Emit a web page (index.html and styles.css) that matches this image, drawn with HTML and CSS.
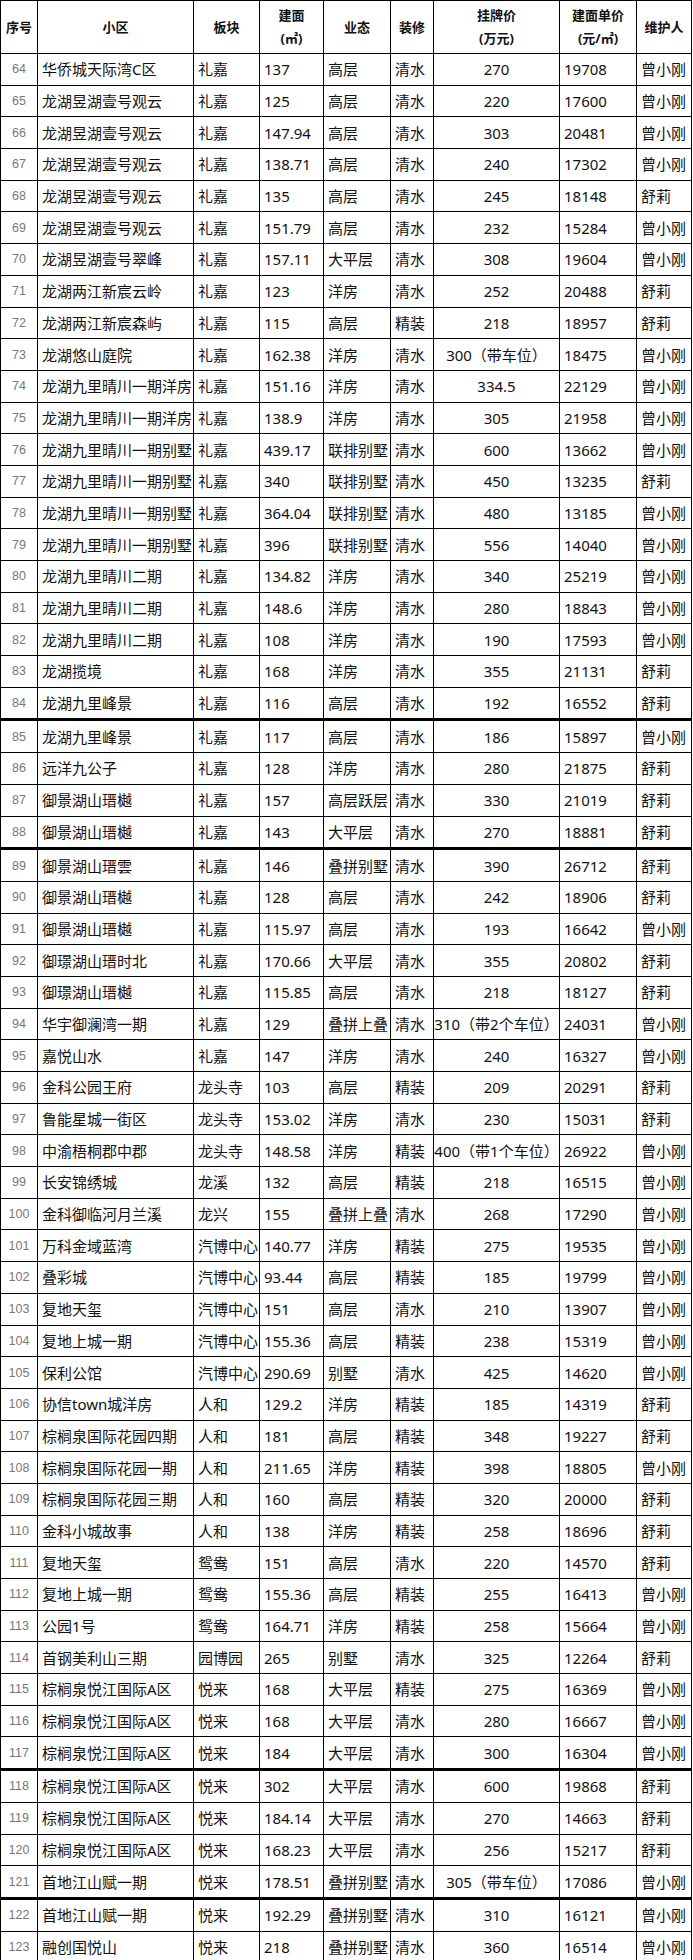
FILE: index.html
```html
<!DOCTYPE html>
<html lang="zh-CN">
<head>
<meta charset="utf-8">
<title>房源表</title>
<link rel="stylesheet" href="styles.css">
</head>
<body>
<table class="listing">
<colgroup>
<col class="c-seq"><col class="c-name"><col class="c-area"><col class="c-size"><col class="c-type"><col class="c-deco"><col class="c-price"><col class="c-unit"><col class="c-agent">
</colgroup>
<thead>
<tr><th>序号</th><th>小区</th><th>板块</th><th>建面<br>(㎡)</th><th>业态</th><th>装修</th><th>挂牌价<br>(万元)</th><th>建面单价<br>(元/㎡)</th><th>维护人</th></tr>
</thead>
<tbody>
<tr><td class="seq">64</td><td>华侨城天际湾C区</td><td>礼嘉</td><td>137</td><td>高层</td><td>清水</td><td class="price">270</td><td>19708</td><td>曾小刚</td></tr>
<tr><td class="seq">65</td><td>龙湖昱湖壹号观云</td><td>礼嘉</td><td>125</td><td>高层</td><td>清水</td><td class="price">220</td><td>17600</td><td>曾小刚</td></tr>
<tr><td class="seq">66</td><td>龙湖昱湖壹号观云</td><td>礼嘉</td><td>147.94</td><td>高层</td><td>清水</td><td class="price">303</td><td>20481</td><td>曾小刚</td></tr>
<tr><td class="seq">67</td><td>龙湖昱湖壹号观云</td><td>礼嘉</td><td>138.71</td><td>高层</td><td>清水</td><td class="price">240</td><td>17302</td><td>曾小刚</td></tr>
<tr><td class="seq">68</td><td>龙湖昱湖壹号观云</td><td>礼嘉</td><td>135</td><td>高层</td><td>清水</td><td class="price">245</td><td>18148</td><td>舒莉</td></tr>
<tr><td class="seq">69</td><td>龙湖昱湖壹号观云</td><td>礼嘉</td><td>151.79</td><td>高层</td><td>清水</td><td class="price">232</td><td>15284</td><td>曾小刚</td></tr>
<tr><td class="seq">70</td><td>龙湖昱湖壹号翠峰</td><td>礼嘉</td><td>157.11</td><td>大平层</td><td>清水</td><td class="price">308</td><td>19604</td><td>曾小刚</td></tr>
<tr><td class="seq">71</td><td>龙湖两江新宸云岭</td><td>礼嘉</td><td>123</td><td>洋房</td><td>清水</td><td class="price">252</td><td>20488</td><td>舒莉</td></tr>
<tr><td class="seq">72</td><td>龙湖两江新宸森屿</td><td>礼嘉</td><td>115</td><td>高层</td><td>精装</td><td class="price">218</td><td>18957</td><td>舒莉</td></tr>
<tr><td class="seq">73</td><td>龙湖悠山庭院</td><td>礼嘉</td><td>162.38</td><td>洋房</td><td>清水</td><td class="price">300（带车位）</td><td>18475</td><td>曾小刚</td></tr>
<tr><td class="seq">74</td><td>龙湖九里晴川一期洋房</td><td>礼嘉</td><td>151.16</td><td>洋房</td><td>清水</td><td class="price">334.5</td><td>22129</td><td>曾小刚</td></tr>
<tr><td class="seq">75</td><td>龙湖九里晴川一期洋房</td><td>礼嘉</td><td>138.9</td><td>洋房</td><td>清水</td><td class="price">305</td><td>21958</td><td>曾小刚</td></tr>
<tr><td class="seq">76</td><td>龙湖九里晴川一期别墅</td><td>礼嘉</td><td>439.17</td><td>联排别墅</td><td>清水</td><td class="price">600</td><td>13662</td><td>曾小刚</td></tr>
<tr><td class="seq">77</td><td>龙湖九里晴川一期别墅</td><td>礼嘉</td><td>340</td><td>联排别墅</td><td>清水</td><td class="price">450</td><td>13235</td><td>舒莉</td></tr>
<tr><td class="seq">78</td><td>龙湖九里晴川一期别墅</td><td>礼嘉</td><td>364.04</td><td>联排别墅</td><td>清水</td><td class="price">480</td><td>13185</td><td>曾小刚</td></tr>
<tr><td class="seq">79</td><td>龙湖九里晴川一期别墅</td><td>礼嘉</td><td>396</td><td>联排别墅</td><td>清水</td><td class="price">556</td><td>14040</td><td>曾小刚</td></tr>
<tr><td class="seq">80</td><td>龙湖九里晴川二期</td><td>礼嘉</td><td>134.82</td><td>洋房</td><td>清水</td><td class="price">340</td><td>25219</td><td>曾小刚</td></tr>
<tr><td class="seq">81</td><td>龙湖九里晴川二期</td><td>礼嘉</td><td>148.6</td><td>洋房</td><td>清水</td><td class="price">280</td><td>18843</td><td>曾小刚</td></tr>
<tr><td class="seq">82</td><td>龙湖九里晴川二期</td><td>礼嘉</td><td>108</td><td>洋房</td><td>清水</td><td class="price">190</td><td>17593</td><td>曾小刚</td></tr>
<tr><td class="seq">83</td><td>龙湖揽境</td><td>礼嘉</td><td>168</td><td>洋房</td><td>清水</td><td class="price">355</td><td>21131</td><td>舒莉</td></tr>
<tr><td class="seq">84</td><td>龙湖九里峰景</td><td>礼嘉</td><td>116</td><td>高层</td><td>清水</td><td class="price">192</td><td>16552</td><td>舒莉</td></tr>
<tr class="sep"><td class="seq">85</td><td>龙湖九里峰景</td><td>礼嘉</td><td>117</td><td>高层</td><td>清水</td><td class="price">186</td><td>15897</td><td>曾小刚</td></tr>
<tr><td class="seq">86</td><td>远洋九公子</td><td>礼嘉</td><td>128</td><td>洋房</td><td>清水</td><td class="price">280</td><td>21875</td><td>舒莉</td></tr>
<tr><td class="seq">87</td><td>御景湖山瑨樾</td><td>礼嘉</td><td>157</td><td>高层跃层</td><td>清水</td><td class="price">330</td><td>21019</td><td>舒莉</td></tr>
<tr><td class="seq">88</td><td>御景湖山瑨樾</td><td>礼嘉</td><td>143</td><td>大平层</td><td>清水</td><td class="price">270</td><td>18881</td><td>舒莉</td></tr>
<tr class="sep"><td class="seq">89</td><td>御景湖山瑨雲</td><td>礼嘉</td><td>146</td><td>叠拼别墅</td><td>清水</td><td class="price">390</td><td>26712</td><td>舒莉</td></tr>
<tr><td class="seq">90</td><td>御景湖山瑨樾</td><td>礼嘉</td><td>128</td><td>高层</td><td>清水</td><td class="price">242</td><td>18906</td><td>舒莉</td></tr>
<tr><td class="seq">91</td><td>御景湖山瑨樾</td><td>礼嘉</td><td>115.97</td><td>高层</td><td>清水</td><td class="price">193</td><td>16642</td><td>曾小刚</td></tr>
<tr><td class="seq">92</td><td>御璟湖山瑨时北</td><td>礼嘉</td><td>170.66</td><td>大平层</td><td>清水</td><td class="price">355</td><td>20802</td><td>舒莉</td></tr>
<tr><td class="seq">93</td><td>御璟湖山瑨樾</td><td>礼嘉</td><td>115.85</td><td>高层</td><td>清水</td><td class="price">218</td><td>18127</td><td>舒莉</td></tr>
<tr><td class="seq">94</td><td>华宇御澜湾一期</td><td>礼嘉</td><td>129</td><td>叠拼上叠</td><td>清水</td><td class="price">310（带2个车位）</td><td>24031</td><td>曾小刚</td></tr>
<tr><td class="seq">95</td><td>嘉悦山水</td><td>礼嘉</td><td>147</td><td>洋房</td><td>清水</td><td class="price">240</td><td>16327</td><td>曾小刚</td></tr>
<tr><td class="seq">96</td><td>金科公园王府</td><td>龙头寺</td><td>103</td><td>高层</td><td>精装</td><td class="price">209</td><td>20291</td><td>舒莉</td></tr>
<tr><td class="seq">97</td><td>鲁能星城一街区</td><td>龙头寺</td><td>153.02</td><td>洋房</td><td>清水</td><td class="price">230</td><td>15031</td><td>舒莉</td></tr>
<tr><td class="seq">98</td><td>中渝梧桐郡中郡</td><td>龙头寺</td><td>148.58</td><td>洋房</td><td>精装</td><td class="price">400（带1个车位）</td><td>26922</td><td>曾小刚</td></tr>
<tr><td class="seq">99</td><td>长安锦绣城</td><td>龙溪</td><td>132</td><td>高层</td><td>精装</td><td class="price">218</td><td>16515</td><td>曾小刚</td></tr>
<tr><td class="seq">100</td><td>金科御临河月兰溪</td><td>龙兴</td><td>155</td><td>叠拼上叠</td><td>清水</td><td class="price">268</td><td>17290</td><td>曾小刚</td></tr>
<tr><td class="seq">101</td><td>万科金域蓝湾</td><td>汽博中心</td><td>140.77</td><td>洋房</td><td>精装</td><td class="price">275</td><td>19535</td><td>曾小刚</td></tr>
<tr><td class="seq">102</td><td>叠彩城</td><td>汽博中心</td><td>93.44</td><td>高层</td><td>精装</td><td class="price">185</td><td>19799</td><td>曾小刚</td></tr>
<tr><td class="seq">103</td><td>复地天玺</td><td>汽博中心</td><td>151</td><td>高层</td><td>清水</td><td class="price">210</td><td>13907</td><td>曾小刚</td></tr>
<tr><td class="seq">104</td><td>复地上城一期</td><td>汽博中心</td><td>155.36</td><td>高层</td><td>精装</td><td class="price">238</td><td>15319</td><td>曾小刚</td></tr>
<tr><td class="seq">105</td><td>保利公馆</td><td>汽博中心</td><td>290.69</td><td>别墅</td><td>清水</td><td class="price">425</td><td>14620</td><td>曾小刚</td></tr>
<tr><td class="seq">106</td><td>协信town城洋房</td><td>人和</td><td>129.2</td><td>洋房</td><td>精装</td><td class="price">185</td><td>14319</td><td>舒莉</td></tr>
<tr><td class="seq">107</td><td>棕榈泉国际花园四期</td><td>人和</td><td>181</td><td>高层</td><td>精装</td><td class="price">348</td><td>19227</td><td>舒莉</td></tr>
<tr><td class="seq">108</td><td>棕榈泉国际花园一期</td><td>人和</td><td>211.65</td><td>洋房</td><td>精装</td><td class="price">398</td><td>18805</td><td>曾小刚</td></tr>
<tr><td class="seq">109</td><td>棕榈泉国际花园三期</td><td>人和</td><td>160</td><td>高层</td><td>精装</td><td class="price">320</td><td>20000</td><td>舒莉</td></tr>
<tr><td class="seq">110</td><td>金科小城故事</td><td>人和</td><td>138</td><td>洋房</td><td>精装</td><td class="price">258</td><td>18696</td><td>舒莉</td></tr>
<tr><td class="seq">111</td><td>复地天玺</td><td>鸳鸯</td><td>151</td><td>高层</td><td>清水</td><td class="price">220</td><td>14570</td><td>舒莉</td></tr>
<tr><td class="seq">112</td><td>复地上城一期</td><td>鸳鸯</td><td>155.36</td><td>高层</td><td>精装</td><td class="price">255</td><td>16413</td><td>曾小刚</td></tr>
<tr><td class="seq">113</td><td>公园1号</td><td>鸳鸯</td><td>164.71</td><td>洋房</td><td>精装</td><td class="price">258</td><td>15664</td><td>曾小刚</td></tr>
<tr><td class="seq">114</td><td>首钢美利山三期</td><td>园博园</td><td>265</td><td>别墅</td><td>清水</td><td class="price">325</td><td>12264</td><td>舒莉</td></tr>
<tr><td class="seq">115</td><td>棕榈泉悦江国际A区</td><td>悦来</td><td>168</td><td>大平层</td><td>精装</td><td class="price">275</td><td>16369</td><td>曾小刚</td></tr>
<tr><td class="seq">116</td><td>棕榈泉悦江国际A区</td><td>悦来</td><td>168</td><td>大平层</td><td>清水</td><td class="price">280</td><td>16667</td><td>曾小刚</td></tr>
<tr><td class="seq">117</td><td>棕榈泉悦江国际A区</td><td>悦来</td><td>184</td><td>大平层</td><td>清水</td><td class="price">300</td><td>16304</td><td>曾小刚</td></tr>
<tr class="sep"><td class="seq">118</td><td>棕榈泉悦江国际A区</td><td>悦来</td><td>302</td><td>大平层</td><td>清水</td><td class="price">600</td><td>19868</td><td>舒莉</td></tr>
<tr><td class="seq">119</td><td>棕榈泉悦江国际A区</td><td>悦来</td><td>184.14</td><td>大平层</td><td>清水</td><td class="price">270</td><td>14663</td><td>舒莉</td></tr>
<tr><td class="seq">120</td><td>棕榈泉悦江国际A区</td><td>悦来</td><td>168.23</td><td>大平层</td><td>清水</td><td class="price">256</td><td>15217</td><td>舒莉</td></tr>
<tr><td class="seq">121</td><td>首地江山赋一期</td><td>悦来</td><td>178.51</td><td>叠拼别墅</td><td>清水</td><td class="price">305（带车位）</td><td>17086</td><td>曾小刚</td></tr>
<tr class="sep"><td class="seq">122</td><td>首地江山赋一期</td><td>悦来</td><td>192.29</td><td>叠拼别墅</td><td>清水</td><td class="price">310</td><td>16121</td><td>曾小刚</td></tr>
<tr><td class="seq">123</td><td>融创国悦山</td><td>悦来</td><td>218</td><td>叠拼别墅</td><td>清水</td><td class="price">360</td><td>16514</td><td>曾小刚</td></tr>
</tbody>
</table>
</body>
</html>
```
FILE: styles.css
```css
html, body {
  margin: 0;
  padding: 0;
  background: #fff;
}

.listing {
  border-collapse: collapse;
  table-layout: fixed;
  width: 691px;
  font-family: "Noto Sans", "Noto Sans CJK SC", sans-serif;
  font-size: 15px;
  color: #111;
}

.c-seq { width: 37px; }
.c-name { width: 156px; }
.c-area { width: 66px; }
.c-size { width: 64px; }
.c-type { width: 67px; }
.c-deco { width: 43px; }
.c-price { width: 126px; }
.c-unit { width: 77px; }
.c-agent { width: 55px; }

.listing th,
.listing td {
  border: 1px solid #000;
  white-space: nowrap;
  overflow: hidden;
  vertical-align: middle;
}

.listing th {
  height: 52px;
  padding: 0;
  font-size: 13px;
  font-weight: bold;
  line-height: 23px;
  text-align: center;
  color: #111;
}

.listing td {
  height: 30.7px;
  padding: 0 0 0 4px;
  line-height: 20px;
  text-align: left;
}

.listing td.seq {
  padding: 0;
  text-align: center;
  font-family: "Liberation Sans", Arial, sans-serif;
  font-size: 12.5px;
  color: #777;
}

.listing td.price {
  padding: 0;
  text-align: center;
}

.listing tr.sep td {
  border-top: 3px solid #000;
}
```
